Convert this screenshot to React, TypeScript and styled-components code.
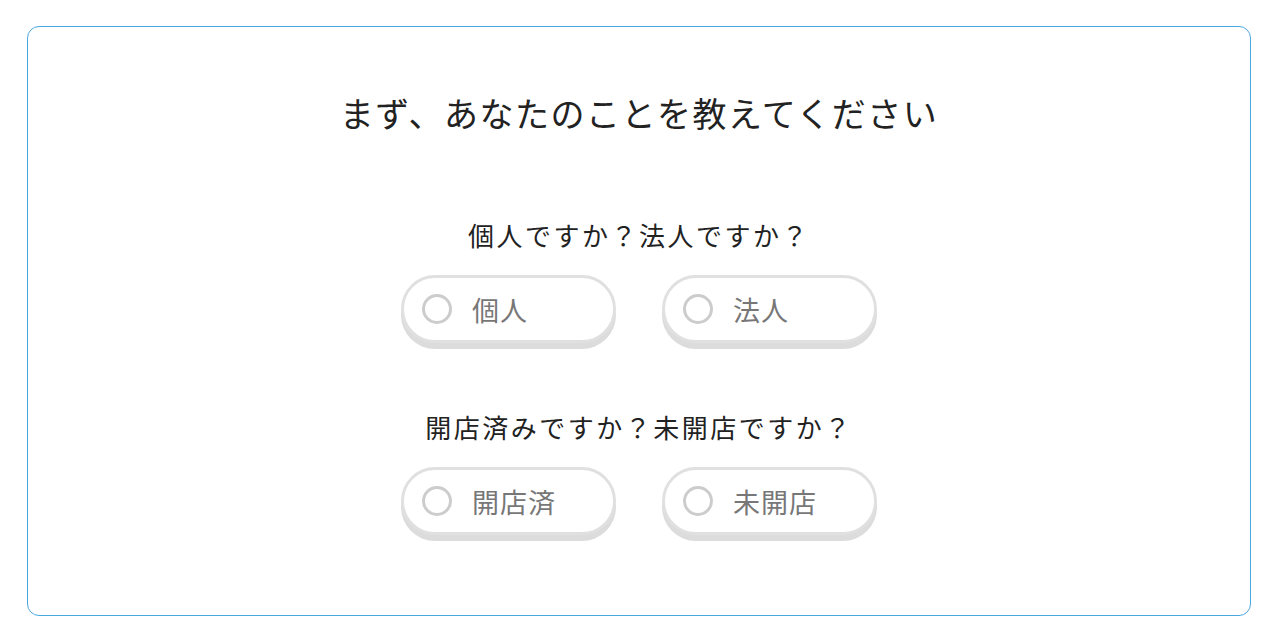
import React, { useState } from 'react';
import styled, { createGlobalStyle } from 'styled-components';

const GlobalStyle = createGlobalStyle`
  html, body {
    margin: 0;
    padding: 0;
    background: #fff;
    font-family: "Noto Sans CJK JP", "Noto Sans", sans-serif;
  }
`;

const Card = styled.section`
  box-sizing: border-box;
  margin: 26px 29px 0 27px;
  height: 590px;
  border: 1px solid #4aa8e0;
  border-radius: 12px;
  display: flex;
  flex-direction: column;
  align-items: center;
  padding-top: 62px;
`;

const Title = styled.h1`
  margin: 0;
  font-size: 34px;
  line-height: 48px;
  font-weight: 400;
  letter-spacing: 1.5px;
  color: #222;
`;

const Question = styled.div<{ $top: number }>`
  display: flex;
  flex-direction: column;
  align-items: center;
  margin-top: ${(p) => p.$top}px;
`;

const Label = styled.p`
  margin: 0 0 22px;
  font-size: 26px;
  line-height: 36px;
  letter-spacing: 2.5px;
  color: #222;
`;

const Options = styled.div`
  display: flex;
  gap: 46px;
`;

const Pill = styled.button<{ $on: boolean }>`
  box-sizing: border-box;
  width: 215px;
  height: 68px;
  border: 3px solid ${(p) => (p.$on ? '#4aa8e0' : '#e0e0e0')};
  border-radius: 35px;
  background: #fff;
  box-shadow: 0 6px 0 #dcdcdc;
  display: flex;
  align-items: center;
  padding: 0 0 0 18px;
  gap: 20px;
  cursor: pointer;
  font-family: inherit;
`;

const Radio = styled.span<{ $on: boolean }>`
  box-sizing: border-box;
  width: 30px;
  height: 30px;
  border-radius: 50%;
  border: 3px solid ${(p) => (p.$on ? '#4aa8e0' : '#cccccc')};
  background: ${(p) => (p.$on ? 'radial-gradient(circle, #4aa8e0 45%, #fff 50%)' : '#fff')};
`;

const OptionText = styled.span`
  font-size: 27px;
  color: #777;
  letter-spacing: 1px;
`;

const groups = [
  { q: '個人ですか？法人ですか？', opts: ['個人', '法人'], top: 80 },
  { q: '開店済みですか？未開店ですか？', opts: ['開店済', '未開店'], top: 66 },
];

function App() {
  const [picked, setPicked] = useState<Record<number, string>>({});
  return (
    <>
      <GlobalStyle />
      <Card>
        <Title>まず、あなたのことを教えてください</Title>
        {groups.map((g, i) => (
          <Question key={g.q} $top={g.top}>
            <Label>{g.q}</Label>
            <Options>
              {g.opts.map((o) => (
                <Pill key={o} $on={picked[i] === o} onClick={() => setPicked({ ...picked, [i]: o })}>
                  <Radio $on={picked[i] === o} />
                  <OptionText>{o}</OptionText>
                </Pill>
              ))}
            </Options>
          </Question>
        ))}
      </Card>
    </>
  );
}

export default App;
